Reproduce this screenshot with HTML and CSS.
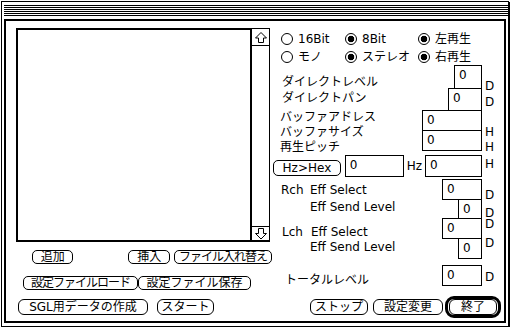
FILE: index.html
```html
<!DOCTYPE html>
<html lang="ja">
<head>
    <meta charset="UTF-8">
    <title>SGL</title>
    <link rel="stylesheet" href="styles.css">
</head>
<body>
    <div class="window">
        <div class="titlebar"></div>
        <div class="frame">
            <div class="left">
                <div class="list">
                    <div class="list-body"></div>
                    <div class="scrollbar">
                        <div class="arrow up">
                            <svg width="16" height="15" viewBox="0 0 16 15"><polygon points="8,2.5 13.5,8 10.5,8 10.5,12.5 5.5,12.5 5.5,8 2.5,8" fill="#fff" stroke="#000" stroke-width="1"/></svg>
                        </div>
                        <div class="track"></div>
                        <div class="arrow down">
                            <svg width="16" height="13" viewBox="0 0 16 13"><polygon points="8,12 13.5,6.5 10.5,6.5 10.5,1.5 5.5,1.5 5.5,6.5 2.5,6.5" fill="#fff" stroke="#000" stroke-width="1"/></svg>
                        </div>
                    </div>
                </div>
                <div class="btn-row row1">
                    <button class="btn add">追加</button>
                    <button class="btn insert">挿入</button>
                    <button class="btn swap">ファイル入れ替え</button>
                </div>
                <div class="btn-row row2">
                    <button class="btn load">設定ファイルロード</button>
                    <button class="btn save">設定ファイル保存</button>
                </div>
            </div>

            <div class="right">
                <div class="radios">
                    <div class="radio"><span class="dot"></span>16Bit</div>
                    <div class="radio"><span class="dot on"></span>8Bit</div>
                    <div class="radio"><span class="dot on"></span>左再生</div>
                    <div class="radio"><span class="dot"></span>モノ</div>
                    <div class="radio"><span class="dot on"></span>ステレオ</div>
                    <div class="radio"><span class="dot on"></span>右再生</div>
                </div>
                <div class="fields">
                    <div class="labels">
                        <div class="lbl dl">ダイレクトレベル</div>
                        <div class="lbl dp">ダイレクトパン</div>
                        <div class="lbl ba">バッファアドレス</div>
                        <div class="lbl bs">バッファサイズ</div>
                        <div class="lbl pitch">再生ピッチ</div>
                        <div class="hz-row">
                            <button class="btn hzhex">Hz&gt;Hex</button>
                            <div class="field hz">0</div>
                            <span class="hz-unit">Hz</span>
                        </div>
                        <div class="lbl rsel"><span class="ch">Rch</span>Eff Select</div>
                        <div class="lbl rsend">Eff Send Level</div>
                        <div class="lbl lsel"><span class="ch">Lch</span>Eff Select</div>
                        <div class="lbl lsend">Eff Send Level</div>
                        <div class="lbl total">トータルレベル</div>
                    </div>
                    <div class="boxes">
                        <div class="field f-dl">0</div>
                        <div class="field f-dp">0</div>
                        <div class="field f-ba">0</div>
                        <div class="field f-bs">0</div>
                        <div class="field f-hex">0</div>
                        <div class="field f-rsel">0</div>
                        <div class="field f-rsend">0</div>
                        <div class="field f-lsel">0</div>
                        <div class="field f-lsend">0</div>
                        <div class="field f-total">0</div>
                    </div>
                    <div class="units">
                        <span class="u u-dl">D</span>
                        <span class="u u-dp">D</span>
                        <span class="u u-ba">H</span>
                        <span class="u u-bs">H</span>
                        <span class="u u-hex">H</span>
                        <span class="u u-rsel">D</span>
                        <span class="u u-rsend">D</span>
                        <span class="u u-lsel">D</span>
                        <span class="u u-lsend">D</span>
                        <span class="u u-total">D</span>
                    </div>
                </div>
            </div>

            <div class="bottom">
                <button class="btn tall sgl">SGL用データの作成</button>
                <button class="btn tall start">スタート</button>
                <button class="btn tall stop">ストップ</button>
                <button class="btn tall apply">設定変更</button>
                <div class="default"><button class="btn tall quit">終了</button></div>
            </div>
        </div>
    </div>
</body>
</html>
```

FILE: styles.css
```css
* {
    box-sizing: border-box;
}
body {
    margin: 0;
    background: #fff;
    color: #000;
    font-family: "DejaVu Sans", "Noto Sans CJK JP", sans-serif;
    font-size: 12px;
    line-height: 12px;
}
.window {
    margin: 1px 0 0 1px;
    width: 508px;
    height: 326px;
    border: 1px solid #000;
    box-shadow: 1px 1px 0 #000;
    padding: 3px 0 0 2px;
}
.titlebar {
    height: 11px;
    background: repeating-linear-gradient(#000 0 1px, #fff 1px 2px);
}
.frame {
    margin-top: 3px;
    width: 502px;
    height: 304px;
    border: 2px solid #000;
    display: grid;
    grid-template-columns: 266px 232px;
    grid-template-rows: auto auto;
}

/* list + scroll bar */
.left {
    padding: 7px 0 0 10px;
}
.list {
    display: flex;
    width: 254px;
    height: 214px;
}
.list-body {
    flex: 1;
    border: 2px solid #000;
}
.scrollbar {
    width: 18px;
    border: 1px solid #000;
    border-left: none;
    border-bottom-width: 2px;
    display: flex;
    flex-direction: column;
}
.arrow {
    display: flex;
    justify-content: center;
}
.arrow.up {
    height: 17px;
    padding-top: 1px;
    border-bottom: 1px solid #000;
}
.arrow.down {
    height: 14px;
    border-top: 1px solid #000;
}
.track {
    flex: 1;
}

/* buttons */
.btn {
    font: inherit;
    color: #000;
    background: #fff;
    border: 1px solid #000;
    border-radius: 5px;
    padding: 0;
    height: 14px;
    line-height: 12px;
    white-space: nowrap;
    text-align: center;
}
.btn.tall {
    height: 16px;
    line-height: 14px;
    border-radius: 6px;
}
.btn-row {
    display: flex;
}
.row1 {
    margin-top: 8px;
}
.row2 {
    margin-top: 12px;
}
.add { width: 43px; margin-left: 16px; }
.insert { width: 43px; margin-left: 55px; }
.swap { width: 102px; margin-left: 4px; letter-spacing: -1px; }
.load { width: 115px; margin-left: 7px; letter-spacing: -1px; }
.save { width: 113px; }

.bottom {
    grid-column: 1 / -1;
    margin-top: 2px;
    display: flex;
    align-items: flex-start;
    padding-right: 3px;
}
.bottom .btn {
    margin-top: 3px;
}
.sgl { width: 130px; margin-left: 12px; }
.start { width: 57px; margin-left: 9px; }
.stop { width: 58px; margin-left: auto; }
.apply { width: 70px; margin-left: 5px; }
.default {
    margin-left: 2px;
    width: 56px;
    height: 22px;
    border: 3px solid #000;
    border-radius: 9px;
    padding: 0 1px;
}
.bottom .default .btn {
    margin-top: 0;
    width: 100%;
}

/* radio buttons */
.radios {
    margin-top: 12px;
    padding-left: 9px;
    display: grid;
    grid-template-columns: 64px 73px auto;
    row-gap: 6px;
}
.radio {
    display: flex;
    align-items: center;
    gap: 5px;
    height: 12px;
    white-space: nowrap;
}
.dot {
    width: 12px;
    height: 12px;
    border: 1px solid #000;
    border-radius: 50%;
}
.dot.on {
    background: radial-gradient(circle, #000 0 3px, #fff 3.6px);
}

/* fields */
.fields {
    display: grid;
    grid-template-columns: 150px 60px 22px;
}
.labels,
.boxes,
.units {
    display: flex;
    flex-direction: column;
}
.boxes {
    align-items: flex-end;
}
.lbl {
    line-height: 14px;
    white-space: nowrap;
    padding-left: 10px;
}
.ch {
    display: inline-block;
    width: 29px;
}
.dl { margin-top: 12px; }
.dp { margin-top: 2px; }
.ba { margin-top: 5px; padding-left: 8px; }
.bs { margin-top: 1px; padding-left: 8px; }
.pitch { margin-top: 1px; padding-left: 8px; }
.rsel { margin-top: 6px; padding-left: 9px; }
.rsend { margin-top: 3px; }
.rsend, .lsend { padding-left: 38px; }
.lsel { margin-top: 11px; }
.lsend { margin-top: 1px; }
.total { margin-top: 19px; padding-left: 13px; }

.hz-row {
    display: flex;
    align-items: flex-start;
    margin-top: 1px;
    height: 22px;
}
.hzhex {
    width: 68px;
    height: 16px;
    line-height: 14px;
    margin: 5px 0 0 1px;
}
.hz-unit {
    margin: 5px 0 0 3px;
}

.field {
    border: 1px solid #000;
    background: #fff;
    padding: 3px 0 0 4px;
}
.field.hz { width: 59px; height: 22px; margin-left: 4px; }
.f-dl { width: 28px; height: 24px; margin-top: 2px; }
.f-dp { width: 34px; height: 23px; margin-top: -1px; }
.f-ba { width: 60px; height: 21px; margin-top: -1px; }
.f-bs { width: 60px; height: 21px; margin-top: -1px; }
.f-hex { width: 57px; height: 22px; margin-top: 4px; }
.f-rsel { width: 40px; height: 21px; margin-top: 2px; }
.f-rsend { width: 24px; height: 22px; margin-top: -1px; }
.f-lsel { width: 40px; height: 21px; margin-top: -3px; }
.f-lsend { width: 24px; height: 21px; margin-top: -1px; }
.f-total { width: 40px; height: 21px; margin-top: 6px; }

.units {
    padding-left: 3px;
}
.u {
    line-height: 10px;
}
.u-dl { margin-top: 18px; }
.u-dp { margin-top: 6px; }
.u-ba { margin-top: 20px; }
.u-bs { margin-top: 5px; }
.u-hex { margin-top: 7px; }
.u-rsel { margin-top: 21px; }
.u-rsend { margin-top: 8px; }
.u-lsel { margin-top: 1px; }
.u-lsend { margin-top: 9px; }
.u-total { margin-top: 24px; }
```
